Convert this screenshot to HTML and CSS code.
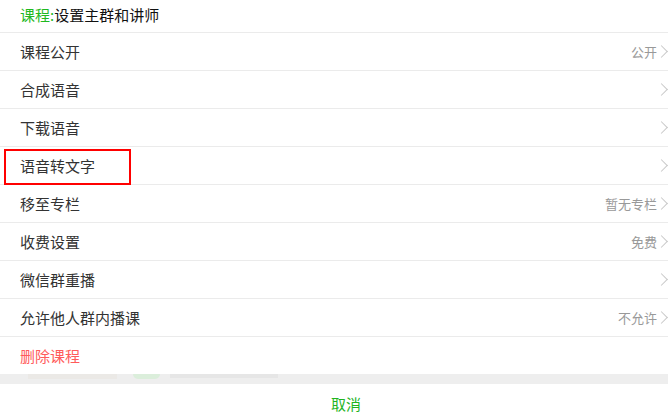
FILE: index.html
```html
<!DOCTYPE html>
<html lang="zh">
<head>
<meta charset="utf-8">
<link rel="stylesheet" href="styles.css">
</head>
<body>
<div class="sheet">
  <div class="title"><span class="title-key">课程:</span>设置主群和讲师</div>
  <ul class="menu">
    <li class="item"><span class="label">课程公开</span><span class="value">公开</span><span class="chev"></span></li>
    <li class="item"><span class="label">合成语音</span><span class="value"></span><span class="chev"></span></li>
    <li class="item"><span class="label">下载语音</span><span class="value"></span><span class="chev"></span></li>
    <li class="item"><span class="label">语音转文字</span><span class="value"></span><span class="chev"></span><span class="highlight"></span></li>
    <li class="item"><span class="label">移至专栏</span><span class="value">暂无专栏</span><span class="chev"></span></li>
    <li class="item"><span class="label">收费设置</span><span class="value">免费</span><span class="chev"></span></li>
    <li class="item"><span class="label">微信群重播</span><span class="value"></span><span class="chev"></span></li>
    <li class="item"><span class="label">允许他人群内播课</span><span class="value">不允许</span><span class="chev"></span></li>
    <li class="item item-last"><span class="label danger">删除课程</span></li>
  </ul>
  <div class="gap">
    <span class="ghost-blob"></span>
    <span class="ghost-pill"></span>
    <span class="ghost-line"></span>
  </div>
  <div class="cancel">取消</div>
</div>
</body>
</html>
```

FILE: styles.css
```css
* { box-sizing: border-box; }
html, body {
  margin: 0;
  padding: 0;
  background: #fff;
  font-family: "Noto Sans CJK SC", "Noto Sans", sans-serif;
  overflow: hidden;
}
.sheet {
  width: 668px;
  height: 417px;
  display: flex;
  flex-direction: column;
  overflow: hidden;
}
.title {
  flex: none;
  height: 33px;
  padding: 0 20px 4px;
  border-bottom: 1px solid #ebebeb;
  font-size: 15px;
  color: #111;
  display: flex;
  align-items: center;
}
.title-key { color: #1fb91f; }
.menu {
  flex: none;
  list-style: none;
  margin: 0;
  padding: 0;
}
.item {
  position: relative;
  height: 38px;
  border-bottom: 1px solid #ebebeb;
  display: flex;
  align-items: center;
  padding-left: 20px;
  padding-bottom: 1px;
}
.item-last { border-bottom: none; height: 37px; }
.label {
  flex: 1;
  font-size: 15px;
  color: #333;
}
.danger { color: #ff5b5b; }
.value {
  font-size: 13px;
  color: #999;
  margin-right: 0;
}
.chev {
  width: 9px;
  height: 9px;
  border-top: 1px solid #c8c8c8;
  border-right: 1px solid #c8c8c8;
  transform: rotate(45deg);
  margin-right: 2px;
  flex: none;
}
.highlight {
  position: absolute;
  left: 4px;
  top: 2px;
  width: 127px;
  height: 36px;
  border: 2px solid #f00;
}
.gap {
  flex: none;
  height: 10px;
  background: #eeeeee;
  display: flex;
  align-items: flex-start;
}
.ghost-blob {
  margin-left: 28px;
  width: 89px;
  height: 5px;
  background: #ebe9e6;
}
.ghost-pill {
  margin-left: 16px;
  width: 27px;
  height: 5px;
  border-radius: 0 0 6px 6px;
  background: #dbeedb;
}
.ghost-line {
  margin-left: 10px;
  width: 108px;
  height: 4px;
  background: #e6e6e6;
}
.cancel {
  flex: none;
  height: 38px;
  display: flex;
  align-items: center;
  justify-content: center;
  padding-left: 24px;
  font-size: 15px;
  color: #1fb41f;
}
```
